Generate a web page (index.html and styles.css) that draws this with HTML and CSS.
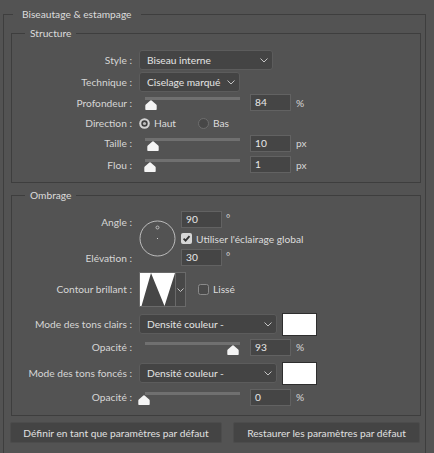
FILE: index.html
```html
<!DOCTYPE html>
<html lang="fr">
<head>
<meta charset="utf-8">
<title>Biseautage &amp; estampage</title>
<link rel="stylesheet" href="styles.css">
</head>
<body>
<fieldset class="group outer">
  <legend class="legend outer-legend">Biseautage &amp; estampage</legend>

  <fieldset class="group inner structure">
    <legend class="legend inner-legend">Structure</legend>

    <div class="row r22">
      <span class="lbl">Style :</span>
      <div class="select w-style"><span>Biseau interne</span><svg class="chev" width="8" height="5" viewBox="0 0 8 5"><path d="M0.5 0.5 L4 4 L7.5 0.5"/></svg></div>
    </div>

    <div class="row r22">
      <span class="lbl">Technique :</span>
      <div class="select w-tech"><span>Ciselage marqué</span><svg class="chev" width="8" height="5" viewBox="0 0 8 5"><path d="M0.5 0.5 L4 4 L7.5 0.5"/></svg></div>
    </div>

    <div class="row r19">
      <span class="lbl">Profondeur :</span>
      <div class="slider"><div class="track"></div><svg class="thumb" style="left:6px" width="12" height="10" viewBox="0 0 12 10"><path d="M6 0.3 Q6.6 0.3 7.2 0.9 L11.2 4.6 Q11.7 5 11.7 5.8 L11.7 9.3 Q11.7 10 11 10 L1 10 Q0.3 10 0.3 9.3 L0.3 5.8 Q0.3 5 0.8 4.6 L4.8 0.9 Q5.4 0.3 6 0.3 Z"/></svg></div>
      <div class="num">84</div>
      <span class="unit">%</span>
    </div>

    <div class="row r22">
      <span class="lbl">Direction :</span>
      <svg class="radio" width="11" height="11" viewBox="0 0 11 11"><circle cx="5.5" cy="5.5" r="5.3" class="radio-on-outer"/><circle cx="5.5" cy="5.5" r="3.2" class="radio-on-inner"/><circle cx="5.5" cy="5.5" r="1.6" class="radio-on-dot"/></svg>
      <span class="radio-text">Haut</span>
      <svg class="radio radio-gap" width="11" height="11" viewBox="0 0 11 11"><circle cx="5.5" cy="5.5" r="5" class="radio-off"/></svg>
      <span class="radio-text">Bas</span>
    </div>

    <div class="row r18">
      <span class="lbl">Taille :</span>
      <div class="slider"><div class="track"></div><svg class="thumb" style="left:8px" width="12" height="10" viewBox="0 0 12 10"><path d="M6 0.3 Q6.6 0.3 7.2 0.9 L11.2 4.6 Q11.7 5 11.7 5.8 L11.7 9.3 Q11.7 10 11 10 L1 10 Q0.3 10 0.3 9.3 L0.3 5.8 Q0.3 5 0.8 4.6 L4.8 0.9 Q5.4 0.3 6 0.3 Z"/></svg></div>
      <div class="num">10</div>
      <span class="unit">px</span>
    </div>

    <div class="row r25">
      <span class="lbl">Flou :</span>
      <div class="slider"><div class="track"></div><svg class="thumb" style="left:5px" width="12" height="10" viewBox="0 0 12 10"><path d="M6 0.3 Q6.6 0.3 7.2 0.9 L11.2 4.6 Q11.7 5 11.7 5.8 L11.7 9.3 Q11.7 10 11 10 L1 10 Q0.3 10 0.3 9.3 L0.3 5.8 Q0.3 5 0.8 4.6 L4.8 0.9 Q5.4 0.3 6 0.3 Z"/></svg></div>
      <div class="num">1</div>
      <span class="unit">px</span>
    </div>
  </fieldset>

  <fieldset class="group inner ombrage">
    <legend class="legend inner-legend">Ombrage</legend>

    <div class="angle">
      <span class="lbl angle-lbl">Angle :</span>
      <svg class="dial" width="37" height="37" viewBox="0 0 37 37"><circle cx="18.5" cy="18.5" r="17.5" class="dial-ring"/><circle cx="18.5" cy="7.5" r="1.5" class="dial-mark"/><rect x="18" y="18" width="1" height="1" class="dial-center"/></svg>
      <div class="angle-field"><div class="num num-tight">90</div><span class="deg">°</span></div>
      <div class="check-line">
        <svg class="check" width="11" height="11" viewBox="0 0 11 11"><rect x="0" y="0" width="11" height="11" rx="2" class="check-on"/><path d="M2.6 5.6 L4.6 7.7 L8.5 3.2" class="check-mark"/></svg>
        <span>Utiliser l'éclairage global</span>
      </div>
      <span class="lbl elev-lbl">Elévation :</span>
      <div class="elev-field"><div class="num num-tight">30</div><span class="deg">°</span></div>
    </div>

    <div class="row r46">
      <span class="lbl">Contour brillant :</span>
      <svg class="contour" width="47" height="35" viewBox="0 0 47 35">
        <rect x="0.5" y="0.5" width="46" height="34" class="contour-frame"/>
        <rect x="1" y="1" width="35" height="33" class="contour-bg"/>
        <polygon points="2.5,34 12,1 25.5,34 36,1 36,34" class="contour-fill"/>
        <line x1="36.5" y1="1" x2="36.5" y2="34" class="contour-div"/>
        <path d="M38.5 16.5 L41.5 19.5 L44.5 16.5" class="contour-chev"/>
      </svg>
      <svg class="check lisse-box" width="11" height="11" viewBox="0 0 11 11"><rect x="0.5" y="0.5" width="10" height="10" rx="2" class="check-off"/></svg>
      <span class="check-text">Lissé</span>
    </div>

    <div class="row r24">
      <span class="lbl">Mode des tons clairs :</span>
      <div class="select w-mode"><span>Densité couleur -</span><svg class="chev" width="8" height="5" viewBox="0 0 8 5"><path d="M0.5 0.5 L4 4 L7.5 0.5"/></svg></div>
      <div class="swatch"></div>
    </div>

    <div class="row r22">
      <span class="lbl">Opacité :</span>
      <div class="slider"><div class="track"></div><svg class="thumb" style="left:88px" width="12" height="10" viewBox="0 0 12 10"><path d="M6 0.3 Q6.6 0.3 7.2 0.9 L11.2 4.6 Q11.7 5 11.7 5.8 L11.7 9.3 Q11.7 10 11 10 L1 10 Q0.3 10 0.3 9.3 L0.3 5.8 Q0.3 5 0.8 4.6 L4.8 0.9 Q5.4 0.3 6 0.3 Z"/></svg></div>
      <div class="num">93</div>
      <span class="unit">%</span>
    </div>

    <div class="row r30">
      <span class="lbl">Mode des tons foncés :</span>
      <div class="select w-mode"><span>Densité couleur -</span><svg class="chev" width="8" height="5" viewBox="0 0 8 5"><path d="M0.5 0.5 L4 4 L7.5 0.5"/></svg></div>
      <div class="swatch"></div>
    </div>

    <div class="row r18">
      <span class="lbl">Opacité :</span>
      <div class="slider"><div class="track"></div><svg class="thumb" style="left:-1px" width="12" height="10" viewBox="0 0 12 10"><path d="M6 0.3 Q6.6 0.3 7.2 0.9 L11.2 4.6 Q11.7 5 11.7 5.8 L11.7 9.3 Q11.7 10 11 10 L1 10 Q0.3 10 0.3 9.3 L0.3 5.8 Q0.3 5 0.8 4.6 L4.8 0.9 Q5.4 0.3 6 0.3 Z"/></svg></div>
      <div class="num">0</div>
      <span class="unit">%</span>
    </div>
  </fieldset>

  <div class="buttons">
    <button class="btn b1" type="button">Définir en tant que paramètres par défaut</button>
    <button class="btn b2" type="button">Restaurer les paramètres par défaut</button>
  </div>
</fieldset>
</body>
</html>
```

FILE: styles.css
```css
* { box-sizing: border-box; }

html, body {
  margin: 0;
  padding: 0;
}

body {
  width: 434px;
  height: 453px;
  overflow: hidden;
  background: #535353;
  font-family: Lato, "Liberation Sans", sans-serif;
  font-size: 10.2px;
  color: #d6d6d6;
}

.group {
  border: 1px solid #3e3e3e;
  margin: 0;
  padding: 0;
  min-width: 0;
}

.outer {
  margin: 6px 0 0 3px;
  width: 423px;
  padding: 0 4px 20px 7px;
}

.legend {
  line-height: 16px;
  padding: 0;
  color: #dcdcdc;
}

.outer-legend {
  margin-left: 2px;
  padding: 0 9px;
}

.inner-legend {
  margin-left: 13px;
  padding: 0 5px;
}

.structure {
  margin-top: 3px;
  width: 410px;
  padding: 8px 0 5px 0;
}

.ombrage {
  margin-top: 4px;
  width: 410px;
  padding: 8px 0 9px 0;
}

.row {
  display: flex;
  align-items: center;
}

.r18 { height: 18px; }
.r19 { height: 19px; }
.r22 { height: 22px; }
.r24 { height: 24px; }
.r25 { height: 25px; }
.r30 { height: 30px; }
.r46 { height: 46px; }

.lbl {
  flex: none;
  width: 120px;
  margin-right: 7px;
  text-align: right;
  white-space: nowrap;
}

.select {
  flex: none;
  display: flex;
  align-items: center;
  justify-content: space-between;
  height: 20px;
  background: #444444;
  border: 1px solid #5c5c5c;
  border-radius: 3px;
  padding: 0 4px 0 7px;
  color: #e4e4e4;
  white-space: nowrap;
}

.w-style { width: 134px; }
.w-tech { width: 101px; }
.w-mode { width: 138px; }

.chev path {
  fill: none;
  stroke: #c4c4c4;
  stroke-width: 1;
}

.slider {
  position: relative;
  flex: none;
  width: 101px;
  height: 17px;
}

.track {
  position: absolute;
  left: 6px;
  right: 0;
  top: 3px;
  height: 3px;
  background: #707070;
}

.thumb {
  position: absolute;
  top: 6px;
}

.thumb path { fill: #f4f4f4; }

.num {
  flex: none;
  width: 41px;
  height: 17px;
  margin-left: 10px;
  background: #454545;
  border: 1px solid #626262;
  padding-left: 4px;
  line-height: 15px;
  color: #e8e8e8;
}

.num-tight { margin-left: 0; }

.unit { margin-left: 5px; }

.radio { flex: none; }
.radio-on-outer { fill: #d4d4d4; }
.radio-on-inner { fill: #3f3f3f; }
.radio-on-dot { fill: #bdbdbd; }
.radio-off { fill: #474747; stroke: #6e6e6e; stroke-width: 1; }
.radio-text { margin-left: 4px; color: #dcdcdc; }
.radio-gap { margin-left: 22px; }

.angle {
  display: grid;
  grid-template-columns: 127px 42px auto;
  grid-template-rows: 17px 21px 17px;
  align-items: center;
}

.angle-lbl { grid-column: 1; grid-row: 1; margin-top: 4px; }
.elev-lbl { grid-column: 1; grid-row: 3; }

.dial {
  grid-column: 2;
  grid-row: 1 / 4;
  align-self: center;
}

.dial-ring { fill: none; stroke: #bcbcbc; stroke-width: 1; }
.dial-mark { fill: none; stroke: #bcbcbc; stroke-width: 1; }
.dial-center { fill: #d0d0d0; }

.angle-field, .elev-field {
  grid-column: 3;
  display: flex;
  align-items: center;
}

.angle-field { grid-row: 1; }
.elev-field { grid-row: 3; }

.deg {
  margin-left: 4px;
  margin-top: -4px;
}

.check-line {
  grid-column: 3;
  grid-row: 2;
  display: flex;
  align-items: center;
  color: #dcdcdc;
}

.check { flex: none; margin-right: 4px; }
.check-on { fill: #d6d6d6; }
.check-mark { fill: none; stroke: #333; stroke-width: 1.8; }
.check-off { fill: #4a4a4a; stroke: #8a8a8a; stroke-width: 1; }

.contour { flex: none; }
.contour-frame { fill: #484848; stroke: #6a6a6a; stroke-width: 1; }
.contour-bg { fill: #ffffff; }
.contour-fill { fill: #464646; }
.contour-div { stroke: #6a6a6a; stroke-width: 1; }
.contour-chev { fill: none; stroke: #c4c4c4; stroke-width: 1; }

.lisse-box { margin-left: 12px; }
.check-text { color: #dcdcdc; }

.swatch {
  flex: none;
  width: 35px;
  height: 23px;
  margin-left: 5px;
  background: #ffffff;
  border: 1px solid #2e2e2e;
}

.buttons {
  display: flex;
  gap: 11px;
  margin: 6px 0 0 -1px;
}

.btn {
  height: 21px;
  padding: 0;
  background: #444444;
  border: 1px solid #4c4c4c;
  border-radius: 2px;
  color: #e0e0e0;
  font: inherit;
  white-space: nowrap;
}

.b1 { width: 212px; }
.b2 { width: 187px; }
```
